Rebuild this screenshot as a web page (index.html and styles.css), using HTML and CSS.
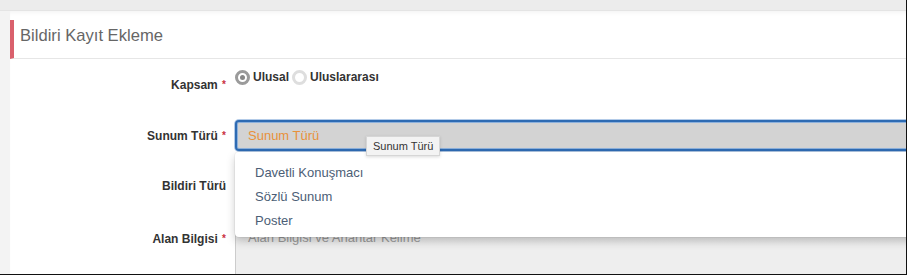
FILE: index.html
```html
<!DOCTYPE html>
<html lang="tr">
<head>
<meta charset="UTF-8" />
<meta name="viewport" content="width=device-width, initial-scale=1" />
<title>Bildiri Kayıt Ekleme</title>
<link rel="stylesheet" href="styles.css">
</head>
<body>

<div class="frame">
  <div class="topbar"></div>
  <div class="panel">
    <div class="panel-head">
      <h2>Bildiri Kayıt Ekleme</h2>
    </div>

    <form class="panel-body">
      <!-- Kapsam -->
      <div class="form-row row-scope">
        <label class="control-label">Kapsam <span class="req">*</span></label>
        <div class="field radios">
          <label class="radio checked"><span class="dot"></span>Ulusal</label>
          <label class="radio"><span class="dot"></span>Uluslararası</label>
        </div>
      </div>

      <!-- Sunum Türü -->
      <div class="form-row row-select">
        <label class="control-label">Sunum Türü <span class="req">*</span></label>
        <div class="field select-wrap">
          <div class="select open">Sunum Türü</div>
          <div class="tip">Sunum Türü</div>
          <ul class="menu">
            <li>Davetli Konuşmacı</li>
            <li>Sözlü Sunum</li>
            <li>Poster</li>
          </ul>
        </div>
      </div>

      <!-- Bildiri Türü (covered by the open menu) -->
      <div class="form-row row-type">
        <label class="control-label">Bildiri Türü</label>
        <div class="field">
          <div class="select"></div>
        </div>
      </div>

      <!-- Alan Bilgisi -->
      <div class="form-row row-area">
        <label class="control-label">Alan Bilgisi <span class="req">*</span></label>
        <div class="field">
          <div class="textarea">Alan Bilgisi ve Anahtar Kelime</div>
        </div>
      </div>
    </form>
  </div>
</div>

</body>
</html>
```

FILE: styles.css
```css
html, body { margin: 0; padding: 0; }
body { font-family: "Liberation Sans", Arial, sans-serif; background: #fff; color: #333; }
.frame {
  width: 906px; height: 274px; overflow: hidden; background: #f3f3f3;
  border-right: 1px solid #111; border-bottom: 1px solid #111;
}
.topbar { height: 10px; background: #ececec; border-bottom: 1px solid #e4e4e4; }
.panel {
  margin-left: 10px; height: 263px; background: #fff; overflow: hidden;
  box-shadow: inset 0 4px 5px -3px rgba(0,0,0,0.06);
}
.panel-head { padding-top: 9px; }
.panel-head h2 {
  margin: 0; height: 39px; box-sizing: border-box; border-left: 4px solid #d9606c;
  border-bottom: 1px solid #e6e6e6; padding: 6px 0 0 6px;
  font-size: 16.6px; line-height: 20px; font-weight: normal; color: #666;
}
.panel-body { margin: 0; padding-top: 10px; }
.form-row { display: flex; align-items: flex-start; }
.control-label {
  width: 216px; box-sizing: border-box; padding-top: 7px; text-align: right;
  font-size: 12px; line-height: 18px; font-weight: bold; color: #333;
}
.control-label .req { color: #c9303e; font-size: 10px; vertical-align: 1px; margin-left: 1px; }
.field { flex: 1; margin-left: 9px; margin-right: -12px; position: relative; }

/* radios */
.row-scope { height: 51px; }
.radios { display: flex; gap: 3px; padding-top: 1px; }
.radio { display: flex; align-items: center; font-size: 12px; font-weight: bold; color: #333; line-height: 15px; }
.radio .dot {
  width: 15px; height: 15px; box-sizing: border-box; border-radius: 50%;
  border: 3px solid #dedede; background: #fff; margin-right: 3px; position: relative;
}
.radio.checked .dot { border-color: #9b9b9b; }
.radio.checked .dot::after {
  content: ""; position: absolute; left: 2px; top: 2px; width: 5px; height: 5px;
  border-radius: 50%; background: #888;
}

/* selects */
.row-select { height: 31px; margin-bottom: 19px; position: relative; z-index: 2; }
.row-type { height: 31px; margin-bottom: 26px; }
.select {
  height: 31px; box-sizing: border-box; padding: 0 12px; border-radius: 4px;
  border: 1px solid #ccc; background: #eee; font-size: 13px; line-height: 29px; color: #999;
}
.select.open {
  border: 2px solid #2e6bb3; background: #d3d3d3; color: #e8913a; line-height: 27px; padding-left: 11px;
  box-shadow: 0 0 0 1px #b3cbe8, inset 0 0 0 1px #8db1dc;
}
.tip {
  position: absolute; left: 131px; top: 16px; padding: 0 6px; height: 20px;
  background: #f3f3f3; border: 1px solid #d6d6d6; box-shadow: 0 1px 3px rgba(0,0,0,0.15);
  font-size: 11px; line-height: 19px; color: #333; z-index: 3; box-sizing: border-box;
}
.menu {
  position: absolute; left: 0; right: 0; top: 32px; margin: 0; padding: 9px 0 4px;
  list-style: none; background: #fff; border-radius: 4px;
  box-shadow: 0 4px 10px rgba(0,0,0,0.2), 0 0 0 1px rgba(0,0,0,0.04);
}
.menu li { padding-left: 20px; height: 24px; line-height: 24px; font-size: 13px; color: #4c5e76; }

/* textarea */
.row-area .control-label { padding-top: 3px; }
.textarea {
  height: 60px; box-sizing: border-box; padding: 1px 12px; border: 1px solid #ccc; border-radius: 4px;
  background: linear-gradient(#e3e3e3, #eeeeee 30%); font-size: 13px; line-height: 18px; color: #999;
}
```
